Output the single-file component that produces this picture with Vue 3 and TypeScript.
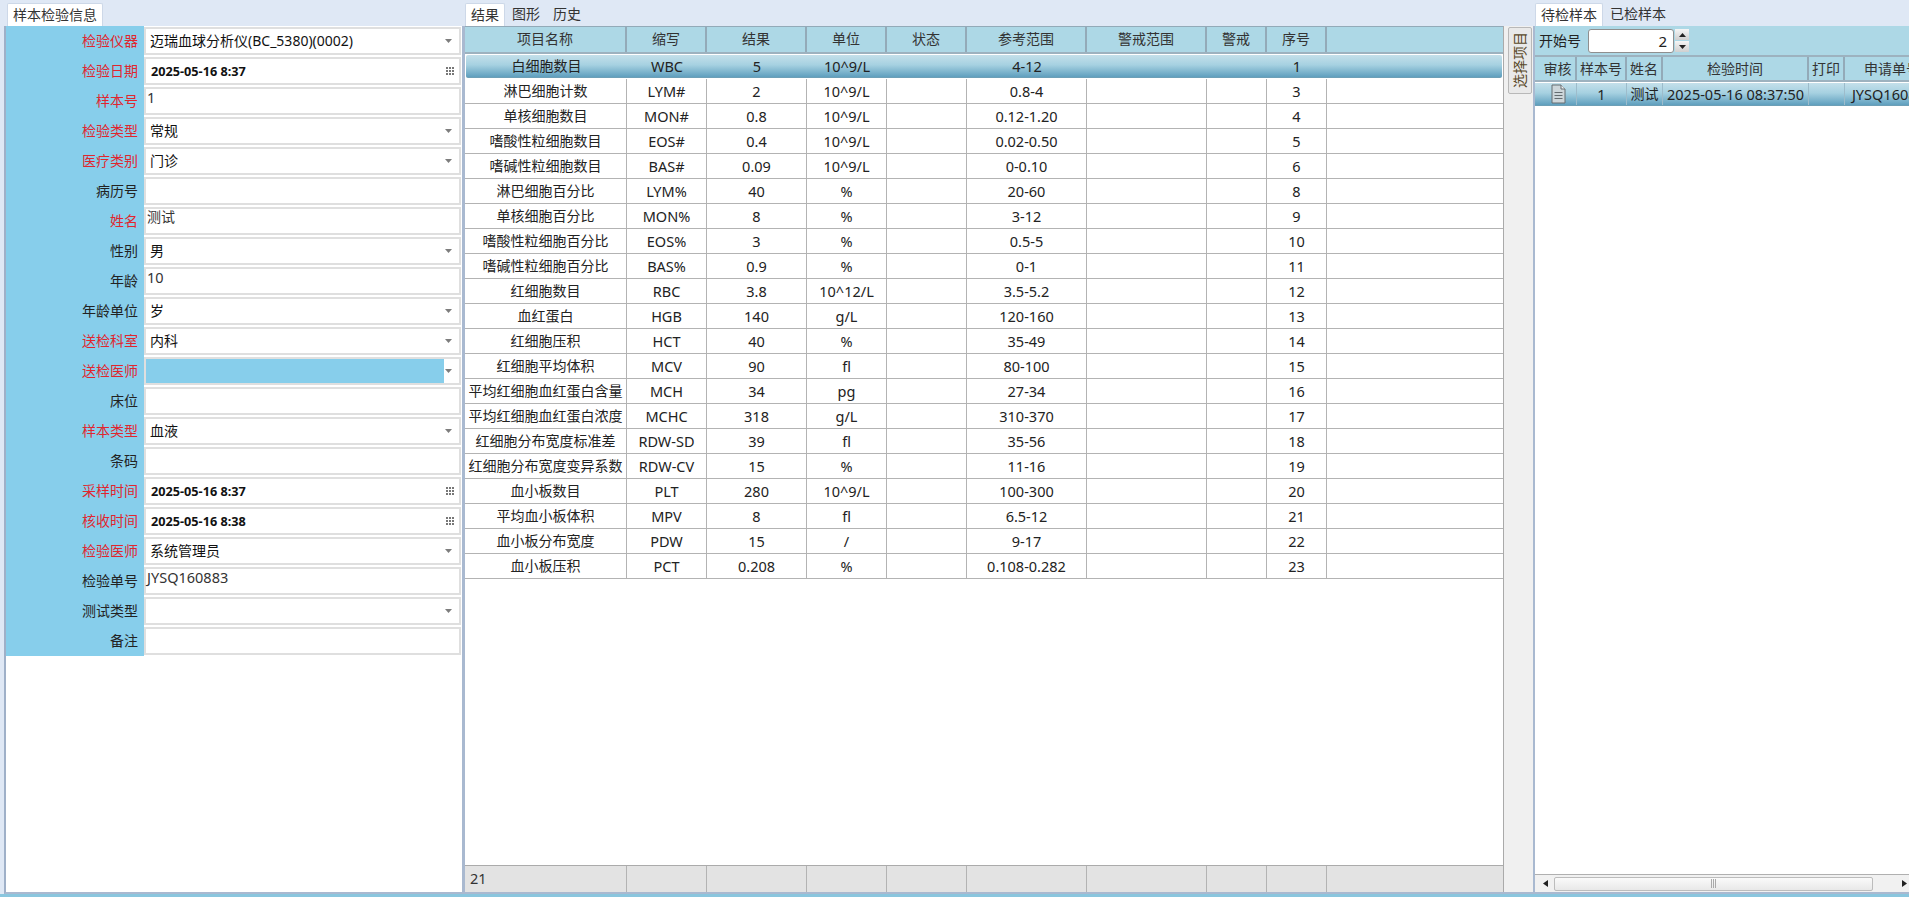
<script setup lang="ts">
type Field = { label: string; req?: boolean; type: 'select' | 'date' | 'text'; value?: string; hi?: boolean }
const fields: Field[] = [
  { label: '检验仪器', req: true, type: 'select', value: '迈瑞血球分析仪(BC_5380)(0002)' },
  { label: '检验日期', req: true, type: 'date', value: '2025-05-16 8:37' },
  { label: '样本号', req: true, type: 'text', value: '1' },
  { label: '检验类型', req: true, type: 'select', value: '常规' },
  { label: '医疗类别', req: true, type: 'select', value: '门诊' },
  { label: '病历号', type: 'text' },
  { label: '姓名', req: true, type: 'text', value: '测试' },
  { label: '性别', type: 'select', value: '男' },
  { label: '年龄', type: 'text', value: '10' },
  { label: '年龄单位', type: 'select', value: '岁' },
  { label: '送检科室', req: true, type: 'select', value: '内科' },
  { label: '送检医师', req: true, type: 'select', hi: true },
  { label: '床位', type: 'text' },
  { label: '样本类型', req: true, type: 'select', value: '血液' },
  { label: '条码', type: 'text' },
  { label: '采样时间', req: true, type: 'date', value: '2025-05-16 8:37' },
  { label: '核收时间', req: true, type: 'date', value: '2025-05-16 8:38' },
  { label: '检验医师', req: true, type: 'select', value: '系统管理员' },
  { label: '检验单号', type: 'text', value: 'JYSQ160883' },
  { label: '测试类型', type: 'select' },
  { label: '备注', type: 'text' },
]
const heads = ['项目名称', '缩写', '结果', '单位', '状态', '参考范围', '警戒范围', '警戒', '序号', '']
const rows: string[][] = [
  ['白细胞数目', 'WBC', '5', '10^9/L', '4-12', '1'],
  ['淋巴细胞计数', 'LYM#', '2', '10^9/L', '0.8-4', '3'],
  ['单核细胞数目', 'MON#', '0.8', '10^9/L', '0.12-1.20', '4'],
  ['嗜酸性粒细胞数目', 'EOS#', '0.4', '10^9/L', '0.02-0.50', '5'],
  ['嗜碱性粒细胞数目', 'BAS#', '0.09', '10^9/L', '0-0.10', '6'],
  ['淋巴细胞百分比', 'LYM%', '40', '%', '20-60', '8'],
  ['单核细胞百分比', 'MON%', '8', '%', '3-12', '9'],
  ['嗜酸性粒细胞百分比', 'EOS%', '3', '%', '0.5-5', '10'],
  ['嗜碱性粒细胞百分比', 'BAS%', '0.9', '%', '0-1', '11'],
  ['红细胞数目', 'RBC', '3.8', '10^12/L', '3.5-5.2', '12'],
  ['血红蛋白', 'HGB', '140', 'g/L', '120-160', '13'],
  ['红细胞压积', 'HCT', '40', '%', '35-49', '14'],
  ['红细胞平均体积', 'MCV', '90', 'fl', '80-100', '15'],
  ['平均红细胞血红蛋白含量', 'MCH', '34', 'pg', '27-34', '16'],
  ['平均红细胞血红蛋白浓度', 'MCHC', '318', 'g/L', '310-370', '17'],
  ['红细胞分布宽度标准差', 'RDW-SD', '39', 'fl', '35-56', '18'],
  ['红细胞分布宽度变异系数', 'RDW-CV', '15', '%', '11-16', '19'],
  ['血小板数目', 'PLT', '280', '10^9/L', '100-300', '20'],
  ['平均血小板体积', 'MPV', '8', 'fl', '6.5-12', '21'],
  ['血小板分布宽度', 'PDW', '15', '/', '9-17', '22'],
  ['血小板压积', 'PCT', '0.208', '%', '0.108-0.282', '23'],
]
function cells(r: string[]): string[] {
  return [r[0], r[1], r[2], r[3], '', r[4], '', '', r[5], '']
}
function isLatin(s?: string): boolean {
  return !!s && /^[\x20-\x7e]+$/.test(s)
}
const sampleHeads = ['审核', '样本号', '姓名', '检验时间', '打印', '申请单号']
const dots = [0, 1, 2].flatMap((y) => [0, 1, 2].map((x) => ({ x: x * 3, y: y * 3 })))
</script>

<template>
  <div class="app">
    <div class="main">
      <section class="left">
        <div class="tabbar left-tabs"><span class="tab active">样本检验信息</span></div>
        <div class="form">
          <div v-for="f in fields" :key="f.label" class="form-row">
            <label class="lbl" :class="{ req: f.req }">{{ f.label }}</label>
            <div class="field" :class="'f-' + f.type">
              <span v-if="f.hi" class="hi"></span>
              <span v-else class="val" :class="{ lat: isLatin(f.value) && f.type === 'text' }">{{ f.value }}</span>
              <svg v-if="f.type === 'select'" class="arrow" width="7" height="4" viewBox="0 0 7 4"><path d="M0 0h7L3.5 4z" fill="#7d7d7d" /></svg>
              <svg v-if="f.type === 'date'" class="dots" width="8" height="8" viewBox="0 0 8 8">
                <rect v-for="(d, i) in dots" :key="i" :x="d.x" :y="d.y" width="2" height="2" fill="#777" />
              </svg>
            </div>
          </div>
        </div>
      </section>

      <section class="mid">
        <div class="tabbar mid-tabs">
          <span class="tab active">结果</span><span class="tab">图形</span><span class="tab">历史</span>
        </div>
        <div class="mid-body">
          <div class="grid">
            <div class="g-row g-head">
              <div v-for="(h, i) in heads" :key="i" class="hcell">{{ h }}</div>
            </div>
            <div class="g-rows">
              <div v-for="(r, i) in rows" :key="r[1]" class="g-row" :class="i === 0 ? 'sel' : 'plain'">
                <div v-for="(c, j) in cells(r)" :key="j" class="cell" :class="{ lat: isLatin(c) }">{{ c }}</div>
              </div>
            </div>
            <div class="g-row g-foot">
              <div class="fcell first">21</div>
              <div v-for="n in 9" :key="n" class="fcell"></div>
            </div>
          </div>
          <div class="strip"><span class="vtab">选择项目</span></div>
        </div>
      </section>

      <section class="right">
        <div class="tabbar right-tabs">
          <span class="tab active">待检样本</span><span class="tab">已检样本</span>
        </div>
        <div class="right-body">
          <div class="toolbar">
            <span class="tool-lbl">开始号</span>
            <div class="spin"><span>2</span></div>
            <div class="spin-btns">
              <span class="sb"><svg width="7" height="4" viewBox="0 0 7 4"><path d="M0 4h7L3.5 0z" fill="#222" /></svg></span>
              <span class="sb"><svg width="7" height="4" viewBox="0 0 7 4"><path d="M0 0h7L3.5 4z" fill="#222" /></svg></span>
            </div>
          </div>
          <div class="s-table">
            <div class="s-row s-head">
              <div v-for="h in sampleHeads" :key="h" class="s-hcell">{{ h }}</div>
            </div>
            <div class="s-row s-sel">
              <div class="s-cell">
                <svg width="15" height="20" viewBox="0 0 15 20">
                  <path d="M1 1h9l4 4v14H1z" fill="#cdd6da" stroke="#646c70" />
                  <path d="M10 1v4h4" fill="#eef1f2" stroke="#646c70" />
                  <path d="M3.5 8.5h8M3.5 11.5h8M3.5 14.5h8" stroke="#646c70" fill="none" />
                </svg>
              </div>
              <div class="s-cell lat">1</div>
              <div class="s-cell">测试</div>
              <div class="s-cell lat">2025-05-16 08:37:50</div>
              <div class="s-cell"></div>
              <div class="s-cell lat">JYSQ160883</div>
            </div>
            <div class="s-fill"></div>
            <div class="hscroll">
              <svg width="5" height="7" viewBox="0 0 5 7"><path d="M5 0v7L0 3.5z" fill="#222" /></svg>
              <div class="thumb"><span class="grip"></span></div>
              <svg width="5" height="7" viewBox="0 0 5 7"><path d="M0 0v7l5-3.5z" fill="#222" /></svg>
            </div>
          </div>
        </div>
      </section>
    </div>
    <div class="bottom"></div>
  </div>
</template>

<style>
html, body { margin: 0; padding: 0; background: #dfe8f5; overflow: hidden; }
</style>

<style scoped>
.app {
  width: 1909px;
  height: 897px;
  display: flex;
  flex-direction: column;
  background: #dfe8f5;
  overflow: hidden;
  font: 14px/20px "Noto Sans", "Noto Sans CJK SC", sans-serif;
  color: #222;
}
.main { flex: 1; min-height: 0; display: flex; }
.bottom { height: 3px; background: #8ac6de; }
.lat { font-size: 14.5px; }

.tabbar { height: 26px; display: flex; align-items: flex-end; background: #dfe8f5; flex: none; }
.tab { height: 23px; line-height: 21px; padding: 0 6px; color: #333; box-sizing: border-box; border-radius: 2px 2px 0 0; }
.tab.active { background: #fff; border: 1px solid #cdd8e8; border-bottom: 0; padding: 0 5px; }
.left-tabs { padding-left: 3px; }
.mid-tabs { padding-left: 2px; }
.mid-tabs .tab { width: 40px; margin-right: 1px; }
.right-tabs { padding-left: 2px; }
.right-tabs .tab { margin-right: 1px; }

.left { width: 463px; padding-left: 4px; box-sizing: border-box; display: flex; flex-direction: column; flex: none; }
.form {
  flex: 1;
  background: #fff;
  border-left: 2px solid #9fb0c8;
  border-right: 1px solid #a9b9d0;
  border-bottom: 2px solid #a9b9d0;
}
.form-row { display: grid; grid-template-columns: 138px 317px; height: 30px; }
.lbl {
  background: #87ceeb;
  text-align: right;
  padding-right: 6px;
  line-height: 29px;
  color: #222;
}
.lbl.req { color: #e0262e; }
.field {
  margin: 1px 0;
  height: 28px;
  box-sizing: border-box;
  border: 2px solid #dfdfdf;
  background: #fff;
  display: flex;
  align-items: center;
}
.field .val { flex: 1; white-space: nowrap; }
.f-select .val { padding-left: 4px; color: #111; }
.f-date .val { padding-left: 5px; font-weight: 700; font-size: 12.7px; color: #111; }
.f-text { align-items: flex-start; }
.f-text .val { padding-left: 1px; line-height: 16px; color: #333; }
.hi { flex: none; width: 298px; height: 100%; background: #87ceeb; margin-right: auto; }
.arrow { margin-right: 7px; flex: none; }
.dots { margin-right: 5px; flex: none; }

.mid { flex: 1; min-width: 0; display: flex; flex-direction: column; }
.mid-body { flex: 1; min-height: 0; display: flex; border-left: 2px solid #a9b9d0; border-bottom: 2px solid #a9b9d0; }
.grid { width: 1039px; flex: none; display: flex; flex-direction: column; background: #fff; border-right: 1px solid #aaa; box-sizing: border-box; }
.g-row { display: grid; grid-template-columns: 162px 80px 100px 80px 80px 120px 120px 60px 60px 1fr; text-align: center; }
.g-rows { flex: 1; min-height: 0; }
.g-head { height: 28px; flex: none; background: #add8e6; border-top: 1px solid #93aab8; border-bottom: 2px solid #9db2bf; box-sizing: border-box; }
.hcell { line-height: 24px; border-right: 2px solid #93aab8; color: #333; }
.hcell:last-child { border-right: 0; }
.cell { line-height: 24px; white-space: nowrap; color: #222; }
.plain { height: 25px; box-sizing: border-box; border-bottom: 1px solid #b3b3b3; }
.plain .cell { border-right: 1px solid #b3b3b3; }
.plain .cell:last-child { border-right: 0; }
.sel { height: 25px; box-sizing: border-box; border-bottom: 1px solid #fff; padding: 1px 0 0; background: #fff; }
.sel .cell { background: linear-gradient(#c4e0ea, #a6d1e1 45%, #5f9fbe); line-height: 22px; color: #222; border-bottom: 1px solid #6d9fb6; height: 23px; box-sizing: border-box; }
.sel .cell:first-child { margin-left: 1px; border-radius: 2px 0 0 2px; }
.sel .cell:last-child { margin-right: 1px; border-radius: 0 2px 2px 0; }
.g-foot { height: 27px; flex: none; background: #e3e3e3; border-top: 1px solid #ababab; box-sizing: border-box; }
.fcell { border-right: 1px solid #b3b3b3; line-height: 25px; text-align: left; }
.fcell:last-child { border-right: 0; }
.first { padding-left: 5px; color: #333; font-size: 14.5px; }
.strip { flex: 1; background: #f0f0f0; padding: 1px 1px 0 4px; }
.vtab {
  display: block;
  width: 24px;
  height: 67px;
  box-sizing: border-box;
  border: 1px solid #b8b8b8;
  border-radius: 2px;
  background: #e9e9e9;
  writing-mode: vertical-rl;
  text-orientation: sideways;
  transform: rotate(180deg);
  line-height: 22px;
  text-align: center;
  color: #5a4a2a;
}

.right { width: 376px; flex: none; display: flex; flex-direction: column; min-width: 0; }
.right-body { flex: 1; min-height: 0; display: flex; flex-direction: column; border-left: 2px solid #a9b9d0; border-bottom: 2px solid #a9b9d0; overflow: hidden; background: #fff; }
.toolbar { height: 29px; flex: none; background: #add8e6; display: flex; align-items: center; padding-left: 4px; }
.tool-lbl { width: 49px; color: #222; }
.spin {
  width: 86px;
  height: 24px;
  box-sizing: border-box;
  background: #fff;
  border: 1px solid #8f8f8f;
  border-radius: 3px;
  text-align: right;
  padding-right: 6px;
  line-height: 22px;
  font-size: 15px;
}
.spin-btns { display: flex; flex-direction: column; gap: 1px; margin-left: 1px; }
.sb { width: 14px; height: 11px; background: linear-gradient(#f6f6f6, #cfcfcf); display: flex; align-items: center; justify-content: center; }
.s-table { flex: 1; min-height: 0; display: flex; flex-direction: column; width: 374px; overflow: hidden; }
.s-row { display: grid; grid-template-columns: 42px 50px 36px 146px 36px 96px; text-align: center; width: 406px; }
.s-head { height: 27px; flex: none; background: #add8e6; border-top: 2px solid #9db2bf; border-bottom: 2px solid #9db2bf; box-sizing: border-box; }
.s-hcell { line-height: 23px; border-right: 2px solid #93aab8; color: #333; white-space: nowrap; box-sizing: border-box; }
.s-hcell:first-child { padding-left: 5px; }
.s-sel { height: 23px; flex: none; margin-top: 1px; background: linear-gradient(#c4e0ea, #a6d1e1 45%, #5f9fbe); border-bottom: 1px solid #6d9fb6; box-sizing: border-box; }
.s-cell { border-right: 1px solid #9dbccb; white-space: nowrap; box-sizing: border-box; display: flex; align-items: center; justify-content: center; min-height: 0; }
.s-cell:first-child { padding-left: 5px; }
.s-fill { flex: 1; }
.hscroll {
  height: 18px;
  flex: none;
  border-top: 1px solid #b0b0b0;
  background: #f1f1f1;
  display: flex;
  align-items: center;
  padding: 0 2px 0 8px;
  box-sizing: border-box;
  gap: 6px;
}
.thumb {
  flex: 1;
  height: 14px;
  border: 1px solid #bcbcbc;
  border-radius: 2px;
  background: linear-gradient(#fafafa, #e8e8e8);
  display: flex;
  justify-content: center;
  align-items: center;
  margin-right: 23px;
  box-sizing: border-box;
}
.grip { width: 5px; height: 9px; border-left: 1px solid #aaa; border-right: 1px solid #aaa; box-sizing: border-box; background: linear-gradient(90deg, transparent 1px, #aaa 1px, #aaa 2px, transparent 2px); }
</style>
